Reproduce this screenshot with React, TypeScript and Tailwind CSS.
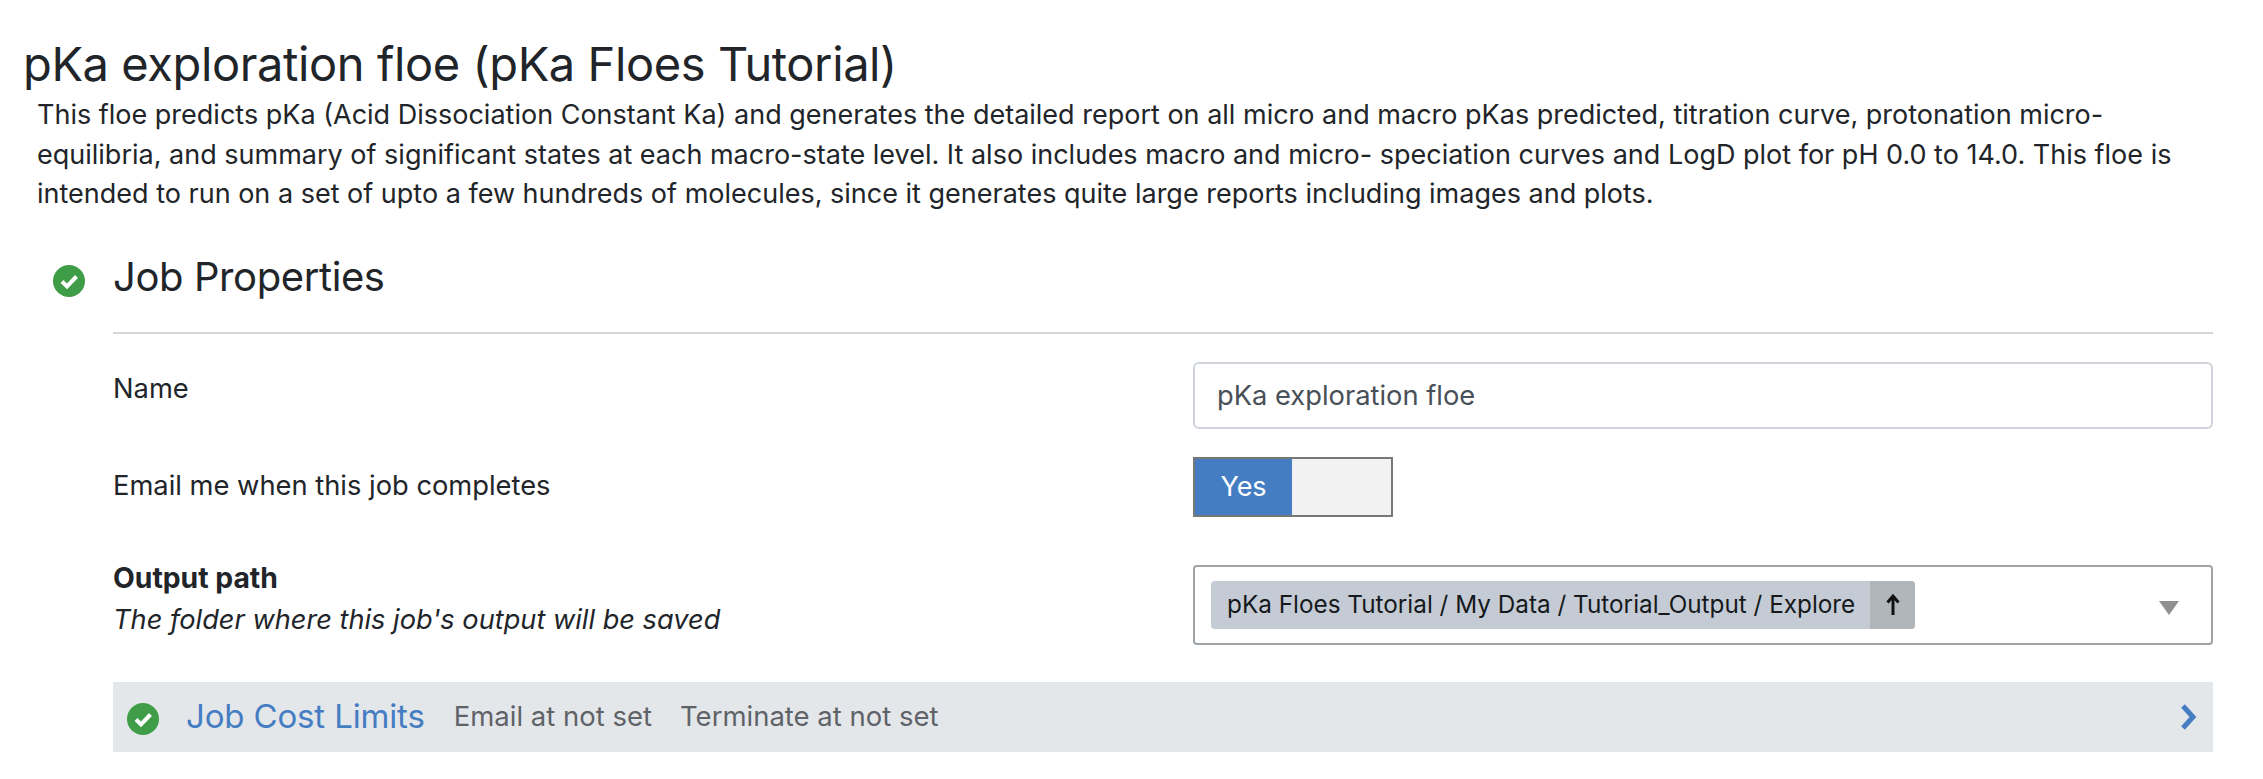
const font = "font-['Inter','Liberation_Sans',sans-serif]";

function Check({ className }: { className: string }) {
  return (
    <svg viewBox="0 0 32 32" className={className}>
      <circle cx="16" cy="16" r="16" fill="#3f9c47" />
      <path d="M9 16.500l5 5 9.500-10" fill="none" stroke="#fff" strokeWidth="4" />
    </svg>
  );
}

export default function App() {
  return (
    <div className={`${font} bg-white h-[779px] w-[2263px] overflow-hidden text-[#212529]`}>
      <h1 className="pl-[23px] pt-[34px] text-[47px] leading-[60px] tracking-[-0.4px] font-normal">pKa exploration floe (pKa Floes Tutorial)</h1>
      <p className="pl-[37px] pr-[50px] mt-[1px] text-[27px] leading-[39.500px]">
        This floe predicts pKa (Acid Dissociation Constant Ka) and generates the detailed report on all micro and macro pKas predicted, titration curve, protonation micro-equilibria, and summary of significant states at each macro-state level. It also includes macro and micro- speciation curves and LogD plot for pH 0.0 to 14.0. This floe is intended to run on a set of upto a few hundreds of molecules, since it generates quite large reports including images and plots.
      </p>
      <div className="flex mt-[38px] pl-[53px] pr-[50px]">
        <Check className="w-8 h-8 mt-[13px] mr-[28px] shrink-0" />
        <div className="flex-1">
          <h2 className="text-[40px] leading-[50px] tracking-[-0.4px] font-normal h-[80px] border-b-2 border-[#d3d6da] box-content">Job Properties</h2>
          <div className="grid grid-cols-[1080px_1020px] items-center mt-[28px]">
            <div className="text-[27.300px] leading-[39px] mb-[14px]">Name</div>
            <div className="h-[67px] border-2 border-[#ced4da] rounded-[6px] px-[22px] pt-[2px] flex items-center text-[27.300px] text-[#495057]">pKa exploration floe</div>
          </div>
          <div className="grid grid-cols-[1080px_1020px] items-center mt-[28px]">
            <div className="text-[27.300px] leading-[39px] mb-[2px]">Email me when this job completes</div>
            <div className="w-[200px] h-[60px] border-2 border-[#777] flex bg-[#f2f2f2]">
              <div className="w-[97px] pt-[2px] bg-[#457dc2] text-white text-[27px] flex items-center justify-center">Yes</div>
            </div>
          </div>
          <div className="grid grid-cols-[1080px_1020px] items-center mt-[48px]">
            <div className="mt-[-12px]">
              <div className="text-[28.300px] leading-[42px] font-bold">Output path</div>
              <div className="text-[27.200px] leading-[42px] italic">The folder where this job's output will be saved</div>
            </div>
            <div className="h-[80px] border-2 border-[#9ea3a8] rounded-[4px] pl-[16px] pr-[32px] flex items-center justify-between">
              <div className="h-[48px] flex bg-[#c4cbd4] rounded-[4px] overflow-hidden text-[24.300px] text-[#16191c]">
                <span className="pl-[16px] pr-[15px] flex items-center whitespace-nowrap">pKa Floes Tutorial / My Data / Tutorial_Output / Explore</span>
                <span className="w-[45px] bg-[#b1b6ba] flex items-center justify-center">
                  <svg viewBox="0 0 16 24" className="w-[16px] h-[24px]"><path d="M8 22V4M2.500 9.500L8 3l5.500 6.500" fill="none" stroke="#111" strokeWidth="3" /></svg>
                </span>
              </div>
              <svg viewBox="0 0 20 14" className="w-[20px] h-[14px] mt-[6px]"><path d="M0 0h20L10 14z" fill="#909090" /></svg>
            </div>
          </div>
          <div className="h-[70px] mt-[37px] bg-[#e4e7ea] flex items-center pl-[14px] pr-[16px]">
            <Check className="w-8 h-8 mt-[4px] mr-[27px] shrink-0" />
            <span className="text-[33px] tracking-[-0.150px] text-[#457dc2] mr-[29px]">Job Cost Limits</span>
            <span className="text-[27.500px] text-[#5f6368] mr-[28px]">Email at not set</span>
            <span className="text-[27.500px] text-[#5f6368]">Terminate at not set</span>
            <svg viewBox="0 0 18 26" className="w-[18px] h-[26px] ml-auto"><path d="M4 2l10 11-10 11" fill="none" stroke="#457dc2" strokeWidth="5" /></svg>
          </div>
        </div>
      </div>
    </div>
  );
}
